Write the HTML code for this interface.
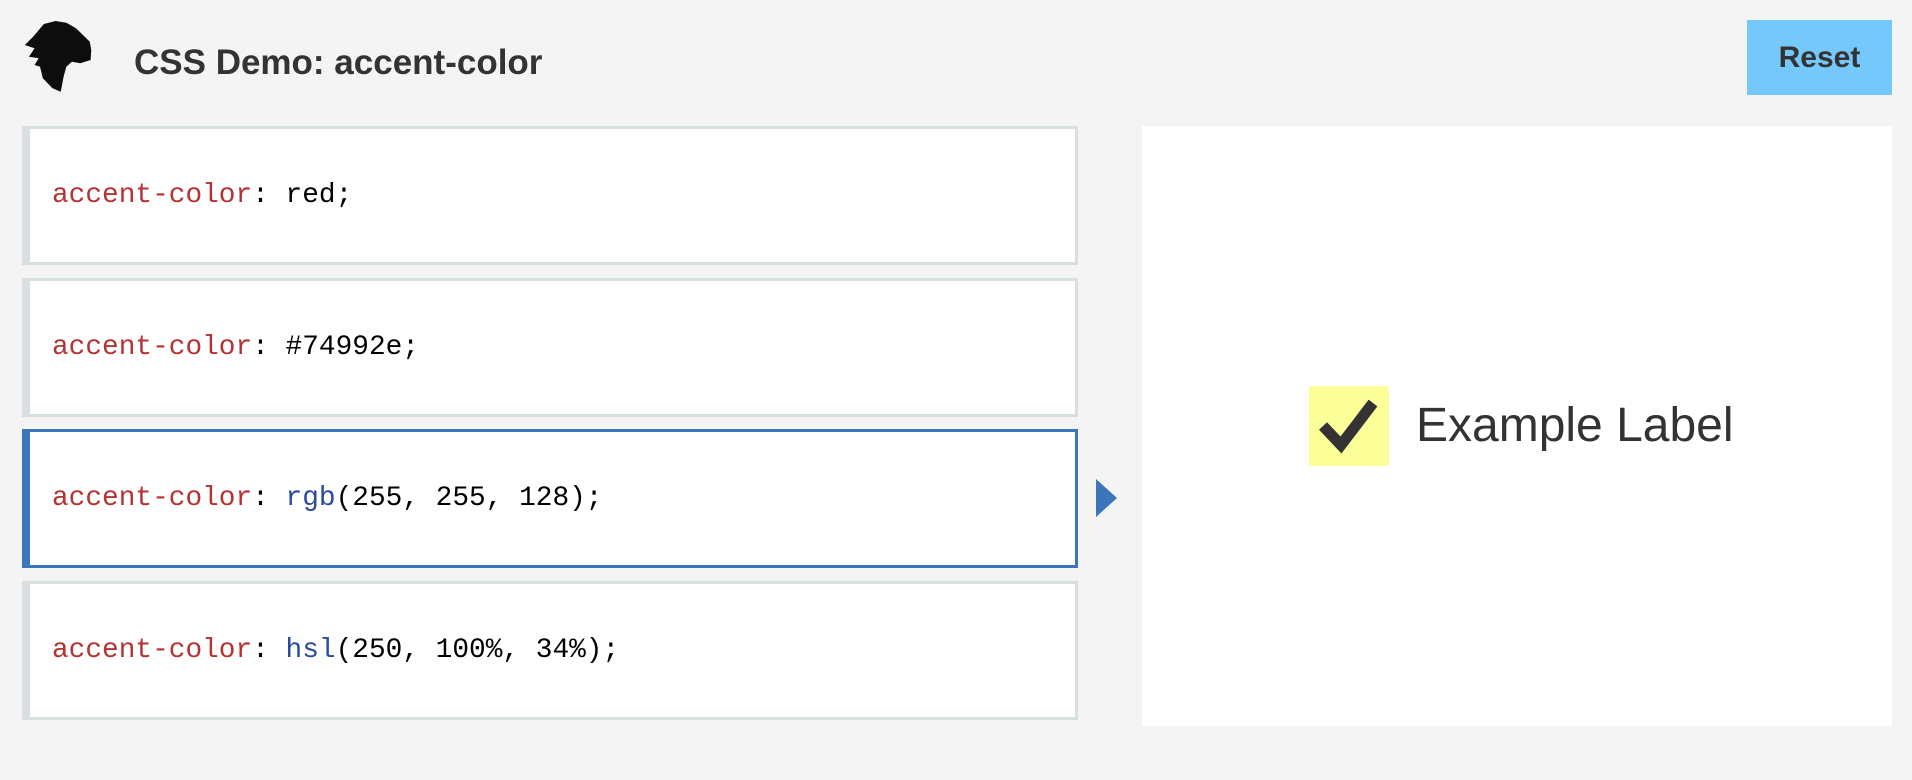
<!DOCTYPE html>
<html><head><meta charset="utf-8"><style>
html,body{margin:0;padding:0}
body{width:1912px;height:780px;background:#f4f4f4;position:relative;overflow:hidden;font-family:"Liberation Sans",Arial,sans-serif}
.title{position:absolute;left:134px;top:40px;font-size:35px;font-weight:bold;color:#333;line-height:46px}
.reset{position:absolute;left:1747px;top:20px;width:145px;height:75px;background:#74c8fc;color:#333;font-weight:bold;font-size:30px;text-align:center;line-height:75px}
.box{position:absolute;left:22px;width:1056px;height:139px;box-sizing:border-box;background:#fff;border:3px solid #d8dfe0;border-left:8px solid #d8dfe0;font-family:"Liberation Mono",monospace;font-size:27.8px;line-height:133px;padding-left:22px;color:#000;white-space:pre}
.box.sel{border-color:#3a76b9}
.p{color:#b53333}.f{color:#2a49a0}
.out{position:absolute;left:1142px;top:126px;width:750px;height:600px;background:#fff}
.cb{position:absolute;left:1309px;top:386px;width:80px;height:80px;background:#fdff98;border-radius:2px}
.lbl{position:absolute;left:1416px;top:396px;font-size:48px;color:#333;line-height:60px}
</style></head><body>
<svg style="position:absolute;left:0;top:0" width="120" height="110" viewBox="0 0 120 110"><g transform="translate(24,0) scale(0.83,1) translate(-24,0)"><path fill="#0d0d0d" d="M48,24 L62,21 L75,22.7 L86.7,28.3 L95,35 L103.3,41.7 L105,50 L104.3,60 L91.7,63.3 L81.7,61.7 L75,66.7 L71.7,76.7 L68.3,91.7 L58.3,88.3 L46.7,78.3 L43.3,66.7 L36.7,65 L41.7,58.3 L30,56.7 L36.7,48.3 L25,45 L35,36.7 Z"/></g></svg>
<div class="title">CSS Demo: accent-color</div>
<div class="reset">Reset</div>
<div class="box" style="top:126px"><span class="p">accent-color</span>: red;</div>
<div class="box" style="top:278px"><span class="p">accent-color</span>: #74992e;</div>
<div class="box sel" style="top:429px"><span class="p">accent-color</span>: <span class="f">rgb</span>(255, 255, 128);</div>
<div class="box" style="top:581px"><span class="p">accent-color</span>: <span class="f">hsl</span>(250, 100%, 34%);</div>
<svg style="position:absolute;left:1096px;top:479px" width="22" height="38"><path d="M0,0 L21,19 L0,38 Z" fill="#3a76b9"/></svg>
<div class="out"></div>
<div class="cb"><svg width="80" height="80" viewBox="0 0 80 80"><path d="M14,40 L32,59 L64,17" fill="none" stroke="#333" stroke-width="11"/></svg></div>
<div class="lbl">Example Label</div>
</body></html>
